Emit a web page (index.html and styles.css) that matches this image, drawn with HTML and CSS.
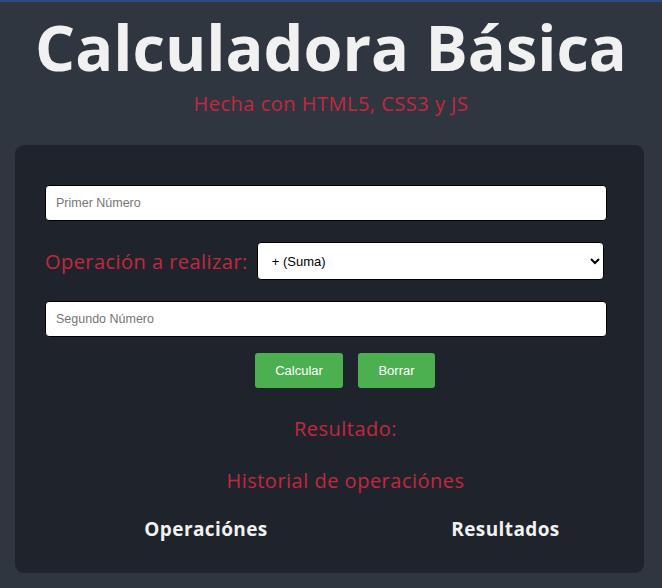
FILE: index.html
```html
<!DOCTYPE html>
<html lang="es">
<head>
<meta charset="utf-8">
<title>Calculadora Básica</title>
<link rel="stylesheet" href="styles.css">
</head>
<body>
<header class="header">
  <h1 class="title">Calculadora Básica</h1>
  <p class="subtitle">Hecha con HTML5, CSS3 y JS</p>
</header>
<main class="card">
  <input class="field" type="text" placeholder="Primer Número">
  <div class="op-row">
    <label class="op-label" for="op">Operación a realizar:</label>
    <select class="op-select" id="op">
      <option>+ (Suma)</option>
      <option>- (Resta)</option>
      <option>* (Multiplicación)</option>
      <option>/ (División)</option>
    </select>
  </div>
  <input class="field" type="text" placeholder="Segundo Número">
  <div class="buttons">
    <button class="btn btn-calc">Calcular</button>
    <button class="btn btn-clear">Borrar</button>
  </div>
  <h3 class="result">Resultado:</h3>
  <h3 class="history">Historial de operaciónes</h3>
  <div class="history-cols">
    <span class="col-head">Operaciónes</span>
    <span class="col-head">Resultados</span>
  </div>
</main>
</body>
</html>
```
FILE: styles.css
```css
* { box-sizing: border-box; }
html, body { height: 100%; }
body {
  margin: 0;
  background: #30363f;
  border-top: 2px solid #2c4c80;
  font-family: "Open Sans", "Liberation Sans", sans-serif;
  overflow: hidden;
}
.header {
  text-align: center;
  padding-top: 5px;
}
.title {
  margin: 0;
  color: #f1f1f1;
  font-weight: 700;
  font-size: 63px;
  line-height: 80px;
}
.subtitle {
  margin: 4px 0 0;
  color: #c3283f;
  font-size: 20px;
  line-height: 26px;
  font-weight: 500;
  letter-spacing: 0.5px;
}
.card {
  margin: 28px 18px 0 15px;
  background: #1f242c;
  border-radius: 9px;
  padding: 40px 37px 40px 30px;
  height: 428px;
}
.field {
  display: block;
  width: 562px;
  height: 36px;
  border: 1px solid #000;
  border-radius: 4px;
  background: #fff;
  padding: 0 10px;
  font-family: "Liberation Sans", Arial, sans-serif;
  font-size: 12.5px;
}
.field::placeholder { color: #767676; }
.op-row {
  display: flex;
  align-items: center;
  gap: 9px;
  margin: 21px 0 21px;
}
.op-label {
  color: #c3283f;
  font-size: 20px;
  font-weight: 500;
  letter-spacing: 0.45px;
  white-space: nowrap;
}
.op-select {
  width: 347px;
  height: 38px;
  border: 1px solid #000;
  border-radius: 4px;
  background: #fff;
  padding: 0 10px;
  font-family: "Liberation Sans", Arial, sans-serif;
  font-size: 13px;
  color: #000;
}
.buttons {
  display: flex;
  justify-content: flex-start;
  gap: 15px;
  margin: 16px 0 0 210px;
}
.btn {
  height: 35px;
  border: none;
  border-radius: 3px;
  background: #4caf50;
  color: #fff;
  font-family: "Liberation Sans", Arial, sans-serif;
  font-size: 13px;
}
.btn-calc { width: 88px; }
.btn-clear { width: 77px; }
.result, .history {
  margin: 0;
  text-align: center;
  color: #c3283f;
  font-size: 20px;
  font-weight: 500;
  line-height: 26px;
  letter-spacing: 0.5px;
  padding-left: 39px;
}
.result { margin-top: 28px; }
.history { margin-top: 26px; }
.history-cols {
  display: grid;
  grid-template-columns: 322px 277px;
  margin-top: 22px;
}
.col-head {
  text-align: center;
  color: #f1f1f1;
  font-weight: 700;
  font-size: 19px;
  line-height: 26px;
  letter-spacing: 0.4px;
}
```
